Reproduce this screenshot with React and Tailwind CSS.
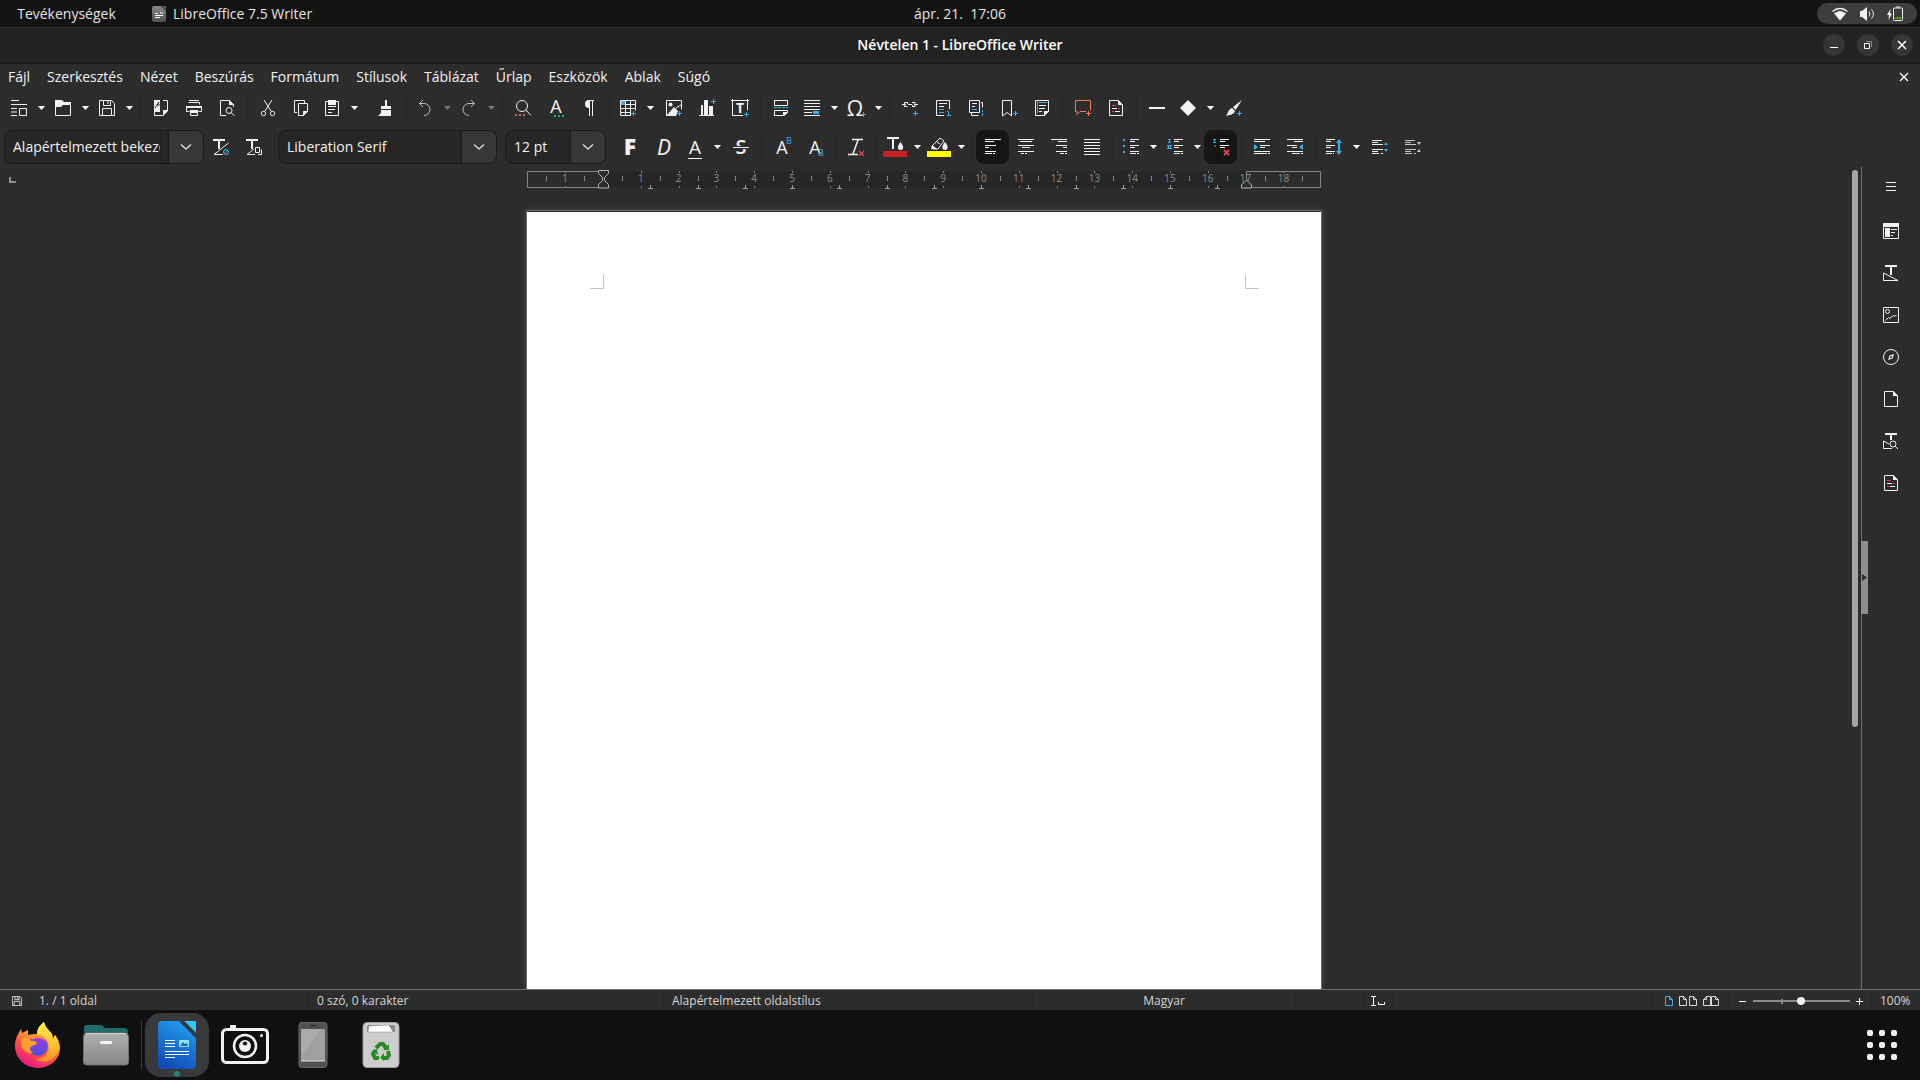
import React, { useState } from 'react';

const BLUE = '#3daee9';
const RED = '#da4453';

const Icon = ({ children, w = 16, h = 16, className = '' }) => (
  <svg
    width={w}
    height={h}
    viewBox={`0 0 ${w} ${h}`}
    fill="none"
    stroke="currentColor"
    className={`shrink-0 overflow-visible ${className}`}
    aria-hidden="true"
  >
    {children}
  </svg>
);

// Letter used inside an icon
const Glyph = ({ x = 8, y = 15, size = 19, fill = 'currentColor', weight = 400, italic, family = 'Open Sans', children }) => (
  <text
    x={x}
    y={y}
    fontSize={size}
    fill={fill}
    stroke="none"
    textAnchor="middle"
    fontWeight={weight}
    fontStyle={italic ? 'italic' : 'normal'}
    fontFamily={`"${family}", sans-serif`}
  >
    {children}
  </text>
);

const Plus = ({ x = 13, y = 13, color = BLUE }) => (
  <path d={`M${x - 2} ${y + 0.5}h5M${x + 0.5} ${y - 2}v5`} stroke={color} />
);

const Page = () => (
  <>
    <path d="M1.5 .5h9l4 4v11h-13z" />
    <path d="M10 0v5h5z" fill="currentColor" stroke="none" />
  </>
);

// Standard toolbar drawings
const Templates = () => (
  <Icon><path d="M0 .5h8M0 4.5h16M0 8.5h6M0 12h6M0 15.5h6M8.5 8.5h7v7h-7z" /></Icon>
);
const Open = () => (
  <Icon><path d="M.5 15.5v-12h15v12z" /><path d="M0 0h7l2 2h7v3H8L6 7H0z" fill="currentColor" stroke="none" /></Icon>
);
const Save = ({ size = 16 }) => (
  <svg width={size} height={size} viewBox="0 0 16 16" fill="none" stroke="currentColor" strokeWidth={16 / size} aria-hidden="true">
    <path d="M.5 .5h12l3 3v12h-15zM3.5 15.5v-7h9v7M4.5 .5v5h7v-5M9 1v3" />
  </svg>
);
const ExportPdf = () => (
  <Icon>
    <path d="M1.5 12v3.500h9M10 .5h4.500v10" />
    <path d="M1 0h6v12H1z M15 10v1l-5 5v-6z" fill="currentColor" stroke="none" />
    <path d="M6 2l-4 6M6 2l-2 3h3" stroke="#2c2c2c" />
  </Icon>
);
const Print = () => (
  <Icon>
    <path d="M3 .5h10M2.500 2.500h11v2M.5 6.500h15v5h-3M.5 6.500v5h3M4.500 10.500h7v5h-7z" />
    <path d="M0 6h16v2H0zM4 10h8v3H4z" fill="currentColor" stroke="none" />
  </Icon>
);
const Preview = () => (
  <Icon>
    <path d="M7 15.500H1.500V.5h9l4 4V7" />
    <path d="M10 0v5h5z" fill="currentColor" stroke="none" />
    <circle cx="10" cy="10.500" r="3" /><path d="M12 12.500l3.500 3.500" />
  </Icon>
);
const Cut = () => (
  <Icon>
    <path d="M4 0l7 11M12 0L5 11" /><circle cx="3.500" cy="13.500" r="2.200" /><circle cx="12.500" cy="13.500" r="2.200" />
  </Icon>
);
const Copy = () => (
  <Icon>
    <path d="M4 12.500H1.500V.5h10V3M5.500 3.500h9v8l-4 4h-5z" /><path d="M10 16v-5h5z" fill="currentColor" stroke="none" />
  </Icon>
);
const Paste = () => (
  <Icon>
    <path d="M1.500 1.500h13v14h-13zM4 6.500h8M4 9.500h7M4 12.500h4" /><path d="M4 0h8v5H4z" fill="currentColor" stroke="none" />
  </Icon>
);
const Clone = () => (
  <Icon>
    <path d="M7 0h2v6h4v3H3V6h4zM3 10h10v6H0l3-3z" fill="currentColor" stroke="none" />
  </Icon>
);
const Undo = () => <Icon className="text-[#c0c0c0]"><path d="M2 3.500h5a6 6 0 0 1 0 12M6 0L2.500 3.500 6 7" /></Icon>;
const Redo = () => <Icon className="text-[#c0c0c0]"><path d="M13 3.500H8a6 6 0 0 0 0 12M10 0l3.500 3.500L10 7" /></Icon>;
const Find = () => (
  <Icon>
    <circle cx="7" cy="6" r="5.500" /><path d="M11 10l5 5.500" /><path d="M0 15h11" stroke="#e06a4a" strokeWidth="2" strokeDasharray="2 2" />
  </Icon>
);
const Spelling = () => (
  <Icon><Glyph x={8} y={13} size={18}>A</Glyph><path d="M6 16h10" stroke="#27ae60" strokeWidth="2" strokeDasharray="2 2" /></Icon>
);
const Marks = () => (
  <Icon><path d="M8.500 0v16M11.500 0v16M7 .5h6" /><path d="M9 0H8a4 4 0 0 0 0 8h1z" fill="currentColor" stroke="none" /></Icon>
);
const InsertTable = () => (
  <Icon>
    <path d="M.5 .5h15v10M.5 .5v15h10M0 4.500h16M0 8.500h16M0 12.500h11M5.500 0v16M10.500 0v16" />
    <path d="M1 1h4v4H1z" fill={BLUE} stroke="none" /><Plus />
  </Icon>
);
const InsertImage = () => (
  <Icon>
    <path d="M.5 12V.5h15v9M.5 12v3.500H9" /><path d="M0 16l8-9 4 4-2 5z" fill="currentColor" stroke="none" />
    <circle cx="4.500" cy="4.500" r="2" fill="currentColor" stroke="none" /><path d="M10 8l5-3" /><Plus />
  </Icon>
);
const InsertChart = () => (
  <Icon>
    <path d="M0 15.500h15" /><path d="M2 5h2v10H2zM5 0h4v15H5zM10 6h4v9h-4z" fill="currentColor" stroke="none" /><Plus x={14} y={1} />
  </Icon>
);
const TextBox = () => (
  <Icon>
    <path d="M-1 .5h18M.5 -1v17M15.500 -1v11M0 15.500h11" /><Glyph x={8} y={13} size={14} weight={700}>T</Glyph><Plus x={14} y={14} />
  </Icon>
);
const PageBreak = () => (
  <Icon>
    <path d="M1.500 0v5.500h13V0M1 .5h14M1.500 16v-5.500h13v2l-3 3H1z" /><path d="M10 16v-4h5z" fill="currentColor" stroke="none" />
    <path d="M1 7.500h14" stroke={BLUE} strokeDasharray="3 1" />
  </Icon>
);
const Field = () => (
  <Icon>
    <path d="M0 .5h16M0 3.500h16M0 6.500h16M0 9.500h16M0 12.500h8M0 15.500h16" /><path d="M9 11h6v3H9z" fill={BLUE} stroke="none" />
  </Icon>
);
const Omega = () => <Icon><Glyph x={7} y={16} size={21}>Ω</Glyph><Plus x={15} y={14} /></Icon>;
const Hyperlink = () => (
  <Icon><path d="M0 4.500h4M5.500 2.500h-3v4h3M6 4.500h4M10 2.500h3v4h-3M12 4.500h4M5.500 2v2M10.500 5v2" /><Plus /></Icon>
);
const Footnote = () => (
  <Icon><path d="M9 15.500H1.500V.5h13V9M4 3.500h8M4 6.500h5" /><path d="M4 9.500h5M4 12.500h5" stroke={BLUE} /><path d="M12 11.500h1.500v4M12 15.500h4" stroke={BLUE} /></Icon>
);
const Endnote = () => (
  <Icon>
    <path d="M1.500 .5h10v12h-10zM13 2.500h1.500v5M3.500 13v2.500h7M4 3.500h5M4 6.500h3" /><path d="M4 9.500h5M14.500 10v2M14.500 13v3" stroke={BLUE} />
  </Icon>
);
const Bookmark = () => <Icon><path d="M1.500 16V.5h9V16L6 12.500z" /><Plus x={14} /></Icon>;
const CrossRef = () => (
  <Icon>
    <path d="M1.500 .5h13v11l-4 4h-9z" /><path d="M10 16v-5h5z" fill="currentColor" stroke="none" />
    <path d="M13 2.500H3.500V13" stroke={BLUE} /><path d="M5 5.500h7M5 8.500h6M5 11.500h3" />
  </Icon>
);
const Comment = () => (
  <Icon className="text-[#f67b50]"><path d="M11 11.500H5l-3 3v-3H.5V.5h15v10M13.500 11v5M11 13.500h5" /></Icon>
);
const TrackChanges = () => (
  <Icon>
    <Page />
    <path d="M4 5.500h4M10 8.500h2M4 11.500h2" stroke={RED} /><path d="M4 8.500h5M7 11.500h5" />
  </Icon>
);
const Line = () => <Icon><path d="M0 8h16" strokeWidth="2" /></Icon>;
const Diamond = () => <Icon><path d="M8 0l8 8-8 8-8-8z" fill="currentColor" stroke="none" /></Icon>;
const Draw = () => (
  <Icon>
    <path d="M16 0L7 7l2.500 3zM6 8l3 3c-1 4-6 4-9 5 2-2 2-7 6-8z" fill="currentColor" stroke="none" /><Plus />
  </Icon>
);

// Formatting toolbar drawings
const UpdateStyle = () => (
  <Icon>
    <path d="M0 1h12M6 1v9" strokeWidth="2" /><path d="M15.500 4L1 15.500h9" /><circle cx="13" cy="13" r="2.500" stroke={BLUE} /><path d="M11 15l4-4" stroke={BLUE} />
  </Icon>
);
const NewStyle = () => (
  <Icon>
    <path d="M0 1h12M6 1v9" strokeWidth="2" /><path d="M8 10L1 15.500h8M9.500 8.500h4v5h-4zM12 15.500h3.500v-5" />
  </Icon>
);
const Bold = () => <Icon><Glyph x={7} y={16} size={23} weight={800}>F</Glyph></Icon>;
const Italic = () => <Icon><Glyph y={16} size={21} italic family="Noto Sans">D</Glyph></Icon>;
const Underline = () => <Icon><Glyph y={15} size={19}>A</Glyph><path d="M1 19.500h14" /></Icon>;
const Strike = () => <Icon><Glyph y={15} size={20} weight={600}>S</Glyph><path d="M0 8.500h16" stroke="#2c2c2c" strokeWidth="3" /><path d="M0 8.500h16" /></Icon>;
const Superscript = () => <Icon><Glyph x={8} y={15} size={18}>A</Glyph><Glyph x={15} y={5} size={9} fill={BLUE}>B</Glyph></Icon>;
const Subscript = () => <Icon><Glyph x={8} y={15} size={18}>A</Glyph><Glyph x={14} y={17} size={9} fill={BLUE}>B</Glyph></Icon>;
const ClearFormat = () => (
  <Icon><path d="M4 .5h11M10 1L5 15M0 15.500h10" strokeWidth="1.500" /><path d="M11 12l5 5M16 12l-5 5" stroke={RED} strokeWidth="1.500" /></Icon>
);
const FontColor = () => (
  <Icon w={24} h={20}>
    <path d="M4 1h12M10 1v11" strokeWidth="2" /><path d="M17.500 5c4 5 3 8 0 8s-4-3 0-8z" fill="currentColor" stroke="none" />
    <path d="M0 14h24v6H0z" fill="#c9211e" stroke="none" />
  </Icon>
);
const Highlight = () => (
  <Icon w={24} h={20}>
    <path d="M13 1l4 3-6 8H6l-1-3zM6 9l3 3M10 5l3 2" /><path d="M5 8l5 4H4z" fill="currentColor" stroke="none" />
    <path d="M18 5c4 5 3 8 0 8s-4-3 0-8z" fill="currentColor" stroke="none" /><path d="M0 14h24v6H0z" fill="#ffff00" stroke="none" />
  </Icon>
);
const AlignLeft = () => <Icon><path d="M0 .5h16M0 2.500h9M0 6.500h11M0 8.500h4M0 12.500h11M0 14.500h7M8 14.500h2" /></Icon>;
const AlignCenter = () => <Icon><path d="M0 .5h16M2 2.500h12M0 6.500h16M4 8.500h8M0 12.500h16M3 14.500h3M7 14.500h2" /></Icon>;
const AlignRight = () => <Icon><path d="M0 .5h16M7 2.500h9M5 6.500h11M12 8.500h4M5 12.500h11M9 14.500h4M14 14.500h2" /></Icon>;
const Justify = () => <Icon><path d="M0 .5h16M0 3.500h16M0 6.500h16M0 9.500h16M0 12.500h16M0 15.500h16" /></Icon>;
const textRows = 'M7 .5h9M7 2.500h5M7 6.500h9M7 8.500h5M7 12.500h9M7 14.500h6M14 14.500h2';
const Bullets = () => <Icon><path d={textRows} /><path d="M0 1h2M0 7h2M0 13h2" stroke={BLUE} strokeWidth="2" /></Icon>;
const Numbering = () => (
  <Icon><path d={textRows} /><path d="M1 .5h3M2.500 0v4M1 3.500h3M0 6.500h5M0 9.500h5M1.500 6v4M3.500 6v4" stroke={BLUE} /></Icon>
);
const NoList = () => (
  <Icon>
    <path d="M7 .5h9M7 2.500h5M7 6.500h9M7 8.500h5" /><path d="M0 .5h3M1.500 0v4M0 3.500h3M1 7h2" stroke={BLUE} />
    <path d="M11 11l5 5M16 11l-5 5" stroke={RED} strokeWidth="2" />
  </Icon>
);
const IndentMore = () => (
  <Icon><path d="M0 .5h16M0 2.500h11M6 6.500h10M6 8.500h5M0 12.500h16M0 14.500h13M14 14.500h2" /><path d="M0 5l4 3-4 3z" fill={BLUE} stroke="none" /></Icon>
);
const IndentLess = () => (
  <Icon><path d="M0 .5h16M7 2.500h9M0 6.500h10M5 8.500h5M0 12.500h16M5 14.500h8M14 14.500h2" /><path d="M16 5l-4 3 4 3z" fill={BLUE} stroke="none" /></Icon>
);
const LineSpacing = () => (
  <Icon>
    <path d="M0 .5h9M0 2.500h5M0 6.500h9M0 8.500h5M0 12.500h9M0 14.500h6M7 14.500h1" />
    <path d="M13 2v12" stroke={BLUE} strokeWidth="2" /><path d="M10 4l3-4 3 4zM10 12l3 4 3-4z" fill={BLUE} stroke="none" />
  </Icon>
);
const ParaSpacing = ({ color = BLUE, flip }) => (
  <Icon className={flip ? 'text-[#c6c6c6]' : ''}>
    <path d="M0 1.500h10M0 3.500h6M0 5.500h11M0 10.500h11M0 12.500h6M0 14.500h7M9 14.500h2" />
    <path d={flip ? 'M12 3h4l-2 3zM12 13h4l-2-3z' : 'M12 6h4l-2-3zM12 10h4l-2 3z'} fill={color} stroke="none" />
  </Icon>
);

// Sidebar drawings
const PropertiesIcon = () => (
  <Icon><path d="M.5 .5h15v15H.5zM8 6.500h6M8 9.500h4M8 12.500h2" /><path d="M0 0h16v4H0zM2 5h5v9H2z" fill="currentColor" stroke="none" /></Icon>
);
const StylesIcon = () => <Icon><path d="M2 1h12M8 1v9" strokeWidth="2" /><path d="M.5 8v7.500H15z" /></Icon>;
const GalleryIcon = () => <Icon><path d="M.5 .5h15v15H.5zM2.500 13.500l3-3 1 1 4-3 1 1 1-1.500 1 1" /><circle cx="4.500" cy="4.500" r="2" /></Icon>;
const NavigatorIcon = () => <Icon><circle cx="8" cy="8" r="7.500" /><path d="M11 5l-1.500 4.500L5 11l1.500-4.500z" fill="currentColor" stroke="none" /><circle cx="8" cy="8" r="1" fill="#2c2c2c" stroke="none" /></Icon>;
const PageIcon = () => <Icon><Page /></Icon>;
const InspectorIcon = () => <Icon><path d="M2 1h12M8 1v6" strokeWidth="2" /><path d="M6 11L.5 8v7.500H9" /><circle cx="10" cy="11" r="3" /><path d="M12 13l3 3" /></Icon>;

const split = (label, icon, dim) => ({ label, icon, split: true, dim });
const btn = (label, icon, active) => ({ label, icon, active });

const standardBar = [
  [split('Új', Templates), split('Megnyitás', Open), split('Mentés', Save)],
  [btn('Exportálás PDF-be', ExportPdf), btn('Nyomtatás', Print), btn('Nyomtatási kép', Preview)],
  [btn('Kivágás', Cut), btn('Másolás', Copy), split('Beillesztés', Paste)],
  [btn('Formátum másolása', Clone)],
  [split('Visszavonás', Undo, true), split('Mégis', Redo, true)],
  [btn('Keresés és csere', Find), btn('Helyesírás', Spelling), btn('Formázási jelek', Marks)],
  [split('Táblázat beszúrása', InsertTable), btn('Kép', InsertImage), btn('Diagram', InsertChart), btn('Szövegdoboz', TextBox)],
  [btn('Oldaltörés', PageBreak), split('Mező', Field), split('Különleges karakter', Omega)],
  [btn('Hiperhivatkozás', Hyperlink), btn('Lábjegyzet', Footnote), btn('Végjegyzet', Endnote), btn('Könyvjelző', Bookmark), btn('Kereszthivatkozás', CrossRef)],
  [btn('Megjegyzés', Comment), btn('Változások követése', TrackChanges)],
  [btn('Vonal', Line), split('Alakzatok', Diamond), btn('Rajzfunkciók', Draw)],
];

const formatBar = [
  [btn('Félkövér', Bold), btn('Dőlt', Italic), split('Aláhúzott', Underline), btn('Áthúzott', Strike)],
  [btn('Felső index', Superscript), btn('Alsó index', Subscript)],
  [btn('Közvetlen formázás törlése', ClearFormat)],
  [split('Betűszín', FontColor), split('Kiemelés', Highlight)],
  [btn('Balra', AlignLeft, true), btn('Középre', AlignCenter), btn('Jobbra', AlignRight), btn('Sorkizárt', Justify)],
  [split('Felsorolás', Bullets), split('Számozás', Numbering), btn('Nincs lista', NoList, true)],
  [btn('Behúzás növelése', IndentMore), btn('Behúzás csökkentése', IndentLess)],
  [split('Sorköz', LineSpacing), btn('Térköz növelése', ParaSpacing), btn('Térköz csökkentése', () => <ParaSpacing flip color="#c6c6c6" />)],
];

const Separator = () => (
  <div className="flex w-2 shrink-0 justify-center">
    <span className="h-8 w-px bg-[#262626]" />
  </div>
);

// pl-px keeps the 16px drawings on whole pixels inside the odd-width buttons
const ToolButton = ({ label, icon: Drawing, split, active, dim }) => (
  <div className="flex shrink-0">
    <button
      title={label}
      aria-label={label}
      className={`flex h-[34px] items-center justify-center rounded-lg ${split ? 'w-[30px]' : 'w-[33px] pl-px'} ${active ? 'bg-[#151515]' : 'hover:bg-white/5'}`}
    >
      <Drawing />
    </button>
    {split && (
      <button aria-label={`${label} menü`} className={`flex w-3.5 items-center justify-center pl-px ${dim ? 'text-[#777777]' : 'text-white'}`}>
        <Icon w={7} h={4}><path d="M0 0h7L3.500 4z" fill="currentColor" stroke="none" /></Icon>
      </button>
    )}
  </div>
);

const ToolGroups = ({ groups }) =>
  groups.map((group, i) => (
    <React.Fragment key={i}>
      {i > 0 && <Separator />}
      {group.map((item) => <ToolButton key={item.label} {...item} />)}
    </React.Fragment>
  ));

const Combo = ({ label, initial, className, seam }) => {
  const [value, setValue] = useState(initial);
  return (
    <div className={`flex h-[34px] shrink-0 overflow-hidden rounded-lg border border-[#191919] bg-[#262626] ${className}`}>
      <input
        aria-label={label}
        value={value}
        onChange={(e) => setValue(e.target.value)}
        className="min-w-0 flex-1 pl-2 text-sm text-[#f2f2f2] outline-none"
      />
      {seam && <span className="w-2 border-l border-[#1e1e1e]" />}
      <button aria-label={`${label} lista`} className="flex w-[35px] items-center justify-center border-l border-[#191919] bg-[#373737] text-[#d8d8d8]">
        <Icon w={10} h={6}><path d="M0 .5l5 4.500 5-4.500" strokeWidth="1.500" /></Icon>
      </button>
    </div>
  );
};

const menus = ['Fájl', 'Szerkesztés', 'Nézet', 'Beszúrás', 'Formátum', 'Stílusok', 'Táblázat', 'Űrlap', 'Eszközök', 'Ablak', 'Súgó'];

const TopBar = () => (
  <header className="grid h-7 shrink-0 grid-cols-[1fr_auto_1fr] items-center border-b border-[#333333] bg-[#131313] text-sm text-[#e4e4e4]">
    <div className="flex items-center">
      <button className="w-[133px] text-center">Tevékenységek</button>
      <button className="ml-[19px] flex items-center gap-[7px]">
        <Icon w={14}>
          <defs>
            <linearGradient id="app" x2="0" y2="1"><stop stopColor="#888888" /><stop offset="1" stopColor="#505050" /></linearGradient>
          </defs>
          <path d="M2 0h7l5 5v9a2 2 0 0 1-2 2H2a2 2 0 0 1-2-2V2a2 2 0 0 1 2-2z" fill="url(#app)" stroke="none" />
          <path d="M10 0h4v4z" fill="#666666" stroke="none" /><path d="M3 7.500h3M3 9.500h8M3 11.500h5M8 7h3" stroke="#ffffff" />
        </Icon>
        LibreOffice 7.5 Writer
      </button>
    </div>
    <button className="whitespace-pre">ápr. 21.  17:06</button>
    <div className="flex justify-end pr-[3px]">
      <button aria-label="Rendszermenü" className="flex h-[21px] w-[100px] items-center justify-center gap-3 rounded-full bg-[#3d3d3d] text-[#f2f2f2]">
        <Icon w={16} h={14}>
          <path d="M.5 4.500C5 .5 11 .5 15.500 4.500" strokeWidth="1.500" /><path d="M2 6.500c4-3.500 8-3.500 12 0l-6 7z" fill="currentColor" stroke="none" />
        </Icon>
        <Icon w={15} h={14}>
          <path d="M0 4h2l5-4v14l-5-4H0z" fill="currentColor" stroke="none" /><path d="M9 4.500q2 2.500 0 5M11.500 2.500q4 4.500 0 9" />
        </Icon>
        <Icon w={16} h={15}>
          <path d="M3.500 3L0 9h2l-.5 5L5 7.500H3z" fill="currentColor" stroke="none" />
          <path d="M6.500 3q0-1 1-1h7q1 0 1 1v10.500q0 1-1 1h-7q-1 0-1-1zM9 1h4" /><path d="M8 11h6v2H8z" fill="#4e9a06" stroke="none" />
        </Icon>
      </button>
    </div>
  </header>
);

const TitleBar = () => (
  <div className="grid h-9 shrink-0 grid-cols-[1fr_auto_1fr] items-center border-b border-[#181818] bg-[#222222] pb-px text-white">
    <span />
    <h1 className="text-sm font-semibold">Névtelen 1 - LibreOffice Writer</h1>
    <div className="flex justify-end gap-3 pr-[7px]">
      <button aria-label="Kis méret" className="flex size-[22px] items-center justify-center rounded-full bg-[#353535]">
        <Icon w={8} h={8}><path d="M0 6.500h8" /></Icon>
      </button>
      <button aria-label="Előző méret" className="flex size-[22px] items-center justify-center rounded-full bg-[#353535]">
        <Icon w={8} h={8}><path d="M2 .5h5.500V6" stroke="#8a8a8a" /><path d="M.5 2.500h5v5h-5z" /></Icon>
      </button>
      <button aria-label="Bezárás" className="flex size-[22px] items-center justify-center rounded-full bg-[#353535]">
        <Icon w={8} h={8}><path d="M0 0l8 8M8 0L0 8" strokeWidth="1.500" /></Icon>
      </button>
    </div>
  </div>
);

const CM = 37.8;
const ORIGIN = 77;
const range = (n) => Array.from({ length: n }, (_, i) => i);

const Ruler = () => (
  <svg width="794" height="18" viewBox="0 0 794 18" fill="none" stroke="#858585" className="overflow-visible" aria-label="Vonalzó">
    <path d="M76 0h644v17H76z" fill="#262626" stroke="none" />
    <path d="M77 .5H.5v16H77M719.500 16.500h74V.5h-74v14" />
    {range(20).map((i) => i - 1).map((n) => (
      <React.Fragment key={n}>
        {n !== 0 && n !== 17 && n < 19 && (
          <path d={`M${Math.round(ORIGIN + n * CM) - 0.5} 0v2m0 13v2`} />
        )}
        {n < 19 && <path d={`M${Math.round(ORIGIN + (n - 0.5) * CM) - 0.5} 5v5`} />}
        {n !== 0 && n < 19 && (
          <text x={ORIGIN + n * CM - 1} y="11" fontSize="10" textAnchor="middle" fill="#858585" stroke="none" fontFamily='"Noto Sans", sans-serif'>
            {Math.abs(n)}
          </text>
        )}
      </React.Fragment>
    ))}
    <path d={`M${Math.round(ORIGIN + 18.5 * CM) - 0.5} 5v5`} />
    {range(13).map((i) => (
      <path key={i} d={`M${Math.round(ORIGIN + (i + 1) * 1.25 * CM) - 0.5} 14v3m-2.500 .5h5`} stroke="#a0a0a0" />
    ))}
    <g fill="#2c2c2c" stroke="#b5b5b5">
      <path d="M71.500 -.5h10v3l-4 4v3l4 4v3.500h-10v-3.500l4-4v-3l-4-4z" />
      <path d="M714.500 17v-3l5-5 5 5v3z" />
    </g>
  </svg>
);

const Workspace = () => (
  <main className="flex min-w-0 flex-1 overflow-hidden bg-[#2c2c2c]">
    <div className="flex w-[18px] shrink-0 items-start pl-[9px] pt-2.5">
      <Icon w={7} h={6}><path d="M1 0v5h6" stroke="#909090" strokeWidth="2" /></Icon>
    </div>
    <div className="flex min-w-0 flex-1 flex-col items-center pr-[22px] pt-1">
      <Ruler />
      <div
        contentEditable
        suppressContentEditableWarning
        role="textbox"
        aria-label="Dokumentum"
        className="mt-[21px] flex w-[796px] flex-1 justify-between border-x border-t border-[#6e6e6e] bg-white pl-[63px] pr-[62px] pt-16 shadow-[0_0_5px_#4a4a4a,inset_0_1px_#2c2c2c] outline-none"
      >
        <span className="size-3.5 border-b border-r border-[#c4c4c4]" />
        <span className="size-3.5 border-b border-l border-[#c4c4c4]" />
      </div>
    </div>
    <div className="w-[9px] shrink-0 pt-[3px]">
      <div className="h-[557px] w-1.5 rounded-full bg-[#a5a5a5]" />
    </div>
  </main>
);

const decks = [
  ['Tulajdonságok', PropertiesIcon],
  ['Stílusok', StylesIcon],
  ['Képtár', GalleryIcon],
  ['Navigátor', NavigatorIcon],
  ['Oldal', PageIcon],
  ['Stílusvizsgáló', InspectorIcon],
  ['Változások kezelése', TrackChanges],
];

const Sidebar = () => (
  <aside className="relative flex w-[59px] shrink-0 flex-col items-center border-l border-[#6e6e6e] bg-[#2c2c2c]">
    <button aria-label="Oldalsáv beállításai" className="flex h-[43px] w-9 items-center justify-center pb-1">
      <Icon w={10} h={10}><path d="M0 .5h10M0 4.500h10M0 8.500h10" /></Icon>
    </button>
    {decks.map(([label, Drawing]) => (
      <button key={label} title={label} aria-label={label} className="flex h-[42px] w-9 items-center justify-center">
        <Drawing />
      </button>
    ))}
    <button aria-label="Oldalsáv elrejtése" className="absolute -left-px top-[374px] flex h-[73px] w-[7px] items-center justify-center bg-[#8e8e8e] text-[#2c2c2c]">
      <Icon w={5} h={7}><path d="M0 0l5 3.500L0 7z" fill="currentColor" stroke="none" /></Icon>
    </button>
  </aside>
);

const cell = 'flex items-center border-l border-[#242424]';

const StatusBar = () => {
  const [zoom, setZoom] = useState(49);
  return (
    <footer className="grid h-[21px] shrink-0 grid-cols-[30px_278fr_355fr_369fr_263fr_68fr_29px_260fr_76px_143px_49px] border-t border-[#707070] bg-[#2c2c2c] pt-0.5 text-xs text-[#d6d6d6]">
      <button aria-label="Dokumentum mentése" className="flex items-center pl-3"><Save size={10} /></button>
      <div className={`${cell} pl-2`}>1. / 1 oldal</div>
      <div className={`${cell} pl-2`}>0 szó, 0 karakter</div>
      <div className={`${cell} pl-2`}>Alapértelmezett oldalstílus</div>
      <div className={`${cell} justify-center`}>Magyar</div>
      <div className={cell} />
      <div className={`${cell} justify-center`}>
        <Icon w={14} h={10}><path d="M0 .5h5M2.500 0v10M0 9.500h5M7.500 6v2.500h6V6" stroke="#ffffff" /></Icon>
      </div>
      <div className={cell} />
      <div className={`${cell} gap-1.5 pl-3`}>
        <button aria-label="Egyoldalas nézet"><Icon w={8} h={10}><path d="M.5 .5h4l3 3v6h-7zM4.500 0v3.500h3" stroke={BLUE} /></Icon></button>
        <button aria-label="Többoldalas nézet"><Icon w={18} h={10}><path d="M.5 .5h4l3 3v6h-7zM4.500 0v3.500h3M10.500 .5h4l3 3v6h-7zM14.500 0v3.500h3" /></Icon></button>
        <button aria-label="Könyvnézet"><Icon w={16} h={10}><path d="M7.500 .5h-4l-3 3v6h15v-6l-3-3h-4v9M7.500 .5v9M3.500 0v3.500H0M12.500 0v3.500H16" /></Icon></button>
      </div>
      <div className={`${cell} gap-1.5 pl-2.5`}>
        <button aria-label="Kicsinyítés"><Icon w={8} h={8}><path d="M0 4.500h7" stroke="#ffffff" /></Icon></button>
        <input
          type="range"
          aria-label="Nagyítás"
          value={zoom}
          onChange={(e) => setZoom(Number(e.target.value))}
          className="h-3 w-[97px] appearance-none bg-[linear-gradient(#8c8c8c,#8c8c8c),linear-gradient(#8c8c8c,#8c8c8c)] bg-[length:100%_2px,2px_5px] bg-[position:center,28px_center] bg-no-repeat [&::-webkit-slider-thumb]:size-2 [&::-webkit-slider-thumb]:appearance-none [&::-webkit-slider-thumb]:rounded-full [&::-webkit-slider-thumb]:bg-[#f0f0f0]"
        />
        <button aria-label="Nagyítás növelése"><Icon w={7} h={7}><path d="M0 3.500h7M3.500 0v7" stroke="#ffffff" /></Icon></button>
      </div>
      <div className={`${cell} pl-2`}>100%</div>
    </footer>
  );
};

// Dock launchers
const Firefox = () => (
  <svg width="46" height="46" viewBox="0 0 46 46" aria-hidden="true">
    <defs>
      <linearGradient id="fx" x1="0.800" y1="0" x2="0.300" y2="1">
        <stop stopColor="#fff44f" /><stop offset=".35" stopColor="#ffa930" /><stop offset=".65" stopColor="#ff4d3d" /><stop offset="1" stopColor="#e3138b" />
      </linearGradient>
      <linearGradient id="globe" x1="0" y1="0" x2="0" y2="1"><stop stopColor="#a138e0" /><stop offset="1" stopColor="#4a55d8" /></linearGradient>
      <linearGradient id="tail" x1=".5" y1="0" x2=".5" y2="1"><stop stopColor="#fff04a" /><stop offset=".6" stopColor="#ffc02e" /><stop offset="1" stopColor="#ff8a2a" /></linearGradient>
    </defs>
    <path d="M29 0c1 5 5 8 8 12l1 5 2-4c3 4 5 8 5 13 0 11-10 20-22 20S0 37 0 24C0 16 3 12 6 7l1 4 6-3v5c3-1 6-1 9-1 0-5 3-9 7-12z" fill="url(#fx)" />
    <path d="M29 0c1 5 5 8 8 12l1 5 2-4c6 10 5 19-4 25-5 3-12 2-15-1 8 0 13-5 13-12 0-6-5-11-12-13 0-5 3-9 7-12z" fill="url(#tail)" />
    <circle cx="23" cy="24" r="10" fill="url(#globe)" />
    <path d="M6 16c4-1 8 0 10 3 3-1 6 1 6 2-1 3-6 2-7 5 0 2 1 4 3 5-6 1-11-3-12-8z" fill="#ffa02c" />
    <path d="M22 13c5 1 7 3 8 6-2-2-5-3-8-3-2 0-4 1-5 2 0-3 2-4 5-5z" fill="#ff8f2a" />
  </svg>
);
const Files = () => (
  <svg width="46" height="42" viewBox="0 0 46 42" aria-hidden="true">
    <defs><linearGradient id="fi" x2="0" y2="1"><stop stopColor="#b0b0b0" /><stop offset="1" stopColor="#878787" /></linearGradient></defs>
    <path d="M1 14V4q0-3 3-3h14q2 0 3 2l1 1h19q4 0 4 4v6z" fill="#1f6b69" />
    <path d="M.5 13q0-4 4-4h37q4 0 4 4v25q0 3-3 3h-39q-3 0-3-3z" fill="url(#fi)" stroke="#6e6e6e" />
    <path d="M3 9.500h40" stroke="#d0d0d0" />
    <rect x="17" y="17" width="12" height="3" rx="1" fill="#f5f5f5" />
  </svg>
);
const Writer = () => (
  <svg width="38" height="48" viewBox="0 0 38 48" aria-hidden="true">
    <defs><linearGradient id="wr" x1=".7" y1="0" x2=".3" y2="1"><stop stopColor="#1fa0ee" /><stop offset="1" stopColor="#1149b5" /></linearGradient></defs>
    <path d="M4 0h17l17 17v27q0 4-4 4H4q-4 0-4-4V4q0-4 4-4z" fill="url(#wr)" />
    <path d="M26 0h12v12z" fill="#2cc8ff" /><path d="M21 0h5l12 12v5z" fill="#333940" />
    <path d="M7 19.500h10M7 22.500h10M7 25.500h10M7 30.500h24M7 33.500h24M7 36.500h10" stroke="#ffffff" />
    <rect x="21" y="19" width="10" height="7" rx="1" fill="#8fe4f5" /><path d="M22 25l3-4 2 2 2-1 1 3z" fill="#1b6ab5" />
  </svg>
);
const Camera = () => (
  <svg width="48" height="40" viewBox="0 0 48 40" fill="none" stroke="#f2f2f2" aria-hidden="true">
    <rect x="1.500" y="4.500" width="45" height="33" rx="4" strokeWidth="3" /><path d="M9 2h6" strokeWidth="4" />
    <circle cx="24" cy="21" r="11" strokeWidth="2.500" /><circle cx="24" cy="21" r="6" fill="#f2f2f2" stroke="none" />
    <circle cx="24" cy="18.500" r="2.500" fill="#101012" /><circle cx="40.500" cy="10.500" r="1.500" fill="#f2f2f2" stroke="none" />
  </svg>
);
const Phone = () => (
  <svg width="30" height="46" viewBox="0 0 30 46" aria-hidden="true">
    <rect x="1" y=".5" width="28" height="45" rx="3" fill="#525052" stroke="#6a6a6a" /><path d="M3 7h24v32H3z" fill="#a0a0a0" />
    <path d="M3 7h20L3 34z" fill="#ababab" /><path d="M3 39h24" stroke="#e0e0e0" /><path d="M13 3.500h5" stroke="#222222" />
  </svg>
);
const Trash = () => (
  <svg width="38" height="46" viewBox="0 0 38 46" aria-hidden="true">
    <rect x="1" y=".5" width="36" height="45" rx="4" fill="#cdcdcd" stroke="#9c9c9c" /><path d="M5 10V5q0-2 2-2h24q2 0 2 2v5z" fill="#888888" />
    <path d="M7 4l20-1 4 7H6z" fill="#ffffff" stroke="#888888" strokeWidth=".5" />
    <g fill="none" stroke="#288a24" strokeWidth="4">
      <path d="M14 26l4-4h3l3 4M26 29l1 4-2 3h-3M17 36h-4l-2-4 2-3" />
    </g>
    <path d="M21 28h6v-6zM22 31v8l-4-3.500zM10 28l5-1 1 6z" fill="#288a24" />
  </svg>
);

const DockButton = ({ label, active, children }) => (
  <button
    title={label}
    aria-label={label}
    className={`relative flex size-16 items-center justify-center rounded-2xl ${active ? 'bg-[#38393b]' : ''}`}
  >
    {children}
    {active && <span className="absolute bottom-0 size-1.5 rounded-full bg-[#2f7f7a]" />}
  </button>
);

const Dock = () => (
  <nav className="flex h-[70px] shrink-0 items-center gap-1 bg-[#0f1012] px-1.5">
    <DockButton label="Firefox"><Firefox /></DockButton>
    <DockButton label="Fájlok"><Files /></DockButton>
    <span className="-mx-px h-12 w-px bg-[#3c3c3e]" />
    <DockButton label="LibreOffice Writer" active><Writer /></DockButton>
    <DockButton label="Képernyőkép"><Camera /></DockButton>
    <DockButton label="Telefon"><Phone /></DockButton>
    <DockButton label="Kuka"><Trash /></DockButton>
    <button aria-label="Alkalmazások megjelenítése" className="ml-auto grid size-16 grid-cols-[repeat(3,auto)] place-content-center gap-1.5">
      {range(9).map((i) => <span key={i} className="size-1.5 rounded-xs bg-[#f2f2f2]" />)}
    </button>
  </nav>
);

const App = () => (
  <div className="flex h-screen flex-col overflow-hidden bg-[#2c2c2c] font-['Open_Sans',sans-serif] text-[#f2f2f2]">
    <TopBar />
    <TitleBar />
    <nav className="flex h-[25px] shrink-0 items-center gap-[17px] border-b border-[#282828] pl-2 pt-0.5 text-sm">
      {menus.map((menu) => <button key={menu}>{menu}</button>)}
      <button aria-label="Dokumentum bezárása" className="ml-auto pr-3">
        <Icon w={8} h={8}><path d="M0 0l8 8M8 0L0 8" strokeWidth="1.500" /></Icon>
      </button>
    </nav>
    <div className="flex h-[38px] shrink-0 items-center pl-1">
      <ToolGroups groups={standardBar} />
    </div>
    <div className="flex h-10 shrink-0 items-center pl-1">
      <Combo label="Bekezdésstílus" initial="Alapértelmezett bekezdésstílus" className="w-[200px]" seam />
      <div className="flex w-[66px] shrink-0 justify-end">
        <ToolButton label="Stílus frissítése" icon={UpdateStyle} />
        <ToolButton label="Új stílus" icon={NewStyle} />
      </div>
      <Separator />
      <Combo label="Betűkészlet neve" initial="Liberation Serif" className="w-[219px]" />
      <Combo label="Betűméret" initial="12 pt" className="ml-2 w-[101px]" />
      <Separator />
      <ToolGroups groups={formatBar} />
    </div>
    <div className="flex min-h-0 flex-1">
      <Workspace />
      <Sidebar />
    </div>
    <StatusBar />
    <Dock />
  </div>
);

export default App;
